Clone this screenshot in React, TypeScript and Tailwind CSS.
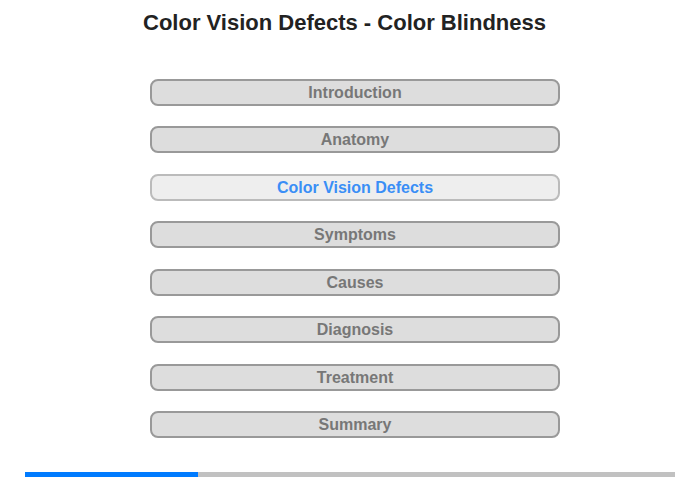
const sections = [
  "Introduction",
  "Anatomy",
  "Color Vision Defects",
  "Symptoms",
  "Causes",
  "Diagnosis",
  "Treatment",
  "Summary",
];

const active = "Color Vision Defects";

const App = () => {
  return (
    <div className="flex h-[480px] w-[700px] flex-col bg-white font-['Liberation_Sans',Arial,sans-serif]">
      <h1 className="mt-[9px] pr-[11px] text-center text-[22px] font-bold leading-[28px] text-[#222]">
        Color Vision Defects - Color Blindness
      </h1>
      <nav className="mt-[42px] flex flex-col items-center gap-[20.45px] pl-[10px]">
        {sections.map(s => (
          <button
            key={s}
            className={
              s === active
                ? "h-[27px] w-[410px] rounded-[8px] border-2 border-solid border-[#bbb] bg-[#eee] text-[16px] font-bold leading-[23px] text-[#3a8ef6]"
                : "h-[27px] w-[410px] rounded-[8px] border-2 border-solid border-[#999] bg-[#ddd] text-[16px] font-bold leading-[23px] text-[#777]"
            }>
            {s}
          </button>
        ))}
      </nav>
      <div className="mx-[25px] mt-auto mb-[3px] flex h-[5px] bg-[#c1c1c1]">
        <div className="w-[173px] bg-[#007bff]" />
      </div>
    </div>
  );
};

export default App;
